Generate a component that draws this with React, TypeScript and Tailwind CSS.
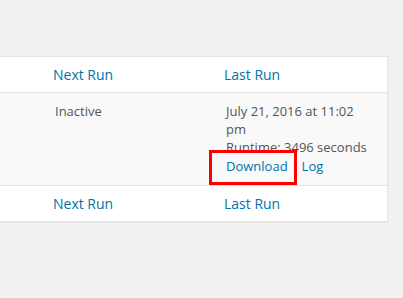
export default function App() {
  const font = { fontFamily: '"Open Sans", "Noto Sans", sans-serif' };
  return (
    <div className="relative w-[403px] h-[298px] bg-[#f1f1f1] overflow-hidden" style={font}>
      <div className="absolute left-0 top-0 w-full h-full">
        <div className="pt-[56px] ml-[-10px]">
          <div className="w-[398px] bg-white border border-[#e5e5e5] shadow-[0_1px_1px_rgba(0,0,0,0.04)]">
            {/* header */}
            <div className="grid grid-cols-[62px_171px_1fr] h-[36px] items-center border-b border-[#e1e1e1] text-[14px] leading-[19.6px] text-[#0073aa]">
              <div />
              <div>Next Run</div>
              <div>Last Run</div>
            </div>
            {/* body */}
            <div className="grid grid-cols-[64px_171px_1fr] h-[92px] bg-[#f9f9f9] text-[13px] leading-[18.2px] text-[#555] pt-[9px]">
              <div />
              <div>Inactive</div>
              <div>
                <div>July 21, 2016 at 11:02</div>
                <div>pm</div>
                <div>Runtime: 3496 seconds</div>
                <div className="flex gap-[14px] text-[#0073aa]">
                  <span>Download</span>
                  <span>Log</span>
                </div>
              </div>
            </div>
            {/* footer */}
            <div className="grid grid-cols-[62px_171px_1fr] h-[36px] items-center border-t border-[#e1e1e1] text-[14px] leading-[19.6px] text-[#0073aa]">
              <div />
              <div>Next Run</div>
              <div>Last Run</div>
            </div>
          </div>
        </div>
      </div>
      <div className="absolute left-[209px] top-[150px] w-[88px] h-[35px] border-[3px] border-[#ff0000]" />
    </div>
  );
}
